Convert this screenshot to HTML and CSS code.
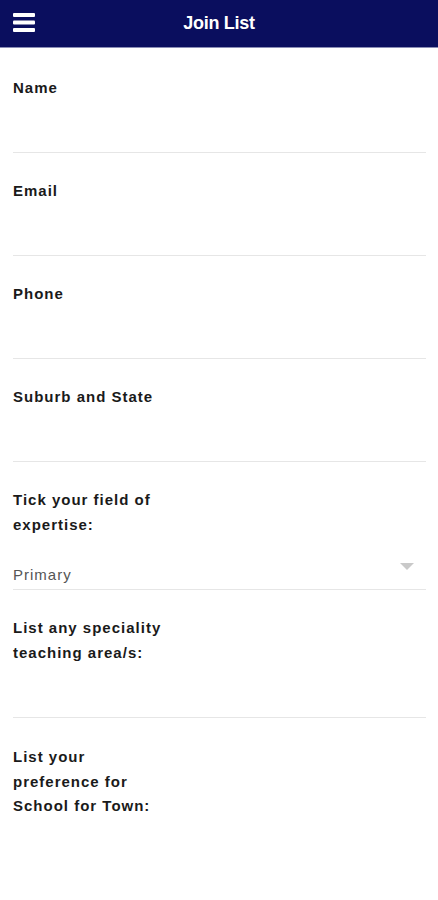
FILE: index.html
```html
<!DOCTYPE html>
<html>
<head>
<meta charset="utf-8">
<link rel="stylesheet" href="styles.css">
</head>
<body>
<header class="topbar">
  <svg class="menu" width="22" height="19" viewBox="0 0 22 19">
    <rect x="0" y="0" width="22" height="4" rx="1" fill="#fff"/>
    <rect x="0" y="7.5" width="22" height="4" rx="1" fill="#fff"/>
    <rect x="0" y="15" width="22" height="4" rx="1" fill="#fff"/>
  </svg>
  <h1 class="title">Join List</h1>
</header>
<main class="form">
  <div class="field">
    <div class="label">Name</div>
    <div class="input"></div>
  </div>
  <div class="field">
    <div class="label">Email</div>
    <div class="input"></div>
  </div>
  <div class="field">
    <div class="label">Phone</div>
    <div class="input"></div>
  </div>
  <div class="field">
    <div class="label">Suburb and State</div>
    <div class="input"></div>
  </div>
  <div class="field">
    <div class="label narrow">Tick your field of expertise:</div>
    <div class="select">
      <span class="value">Primary</span>
      <svg class="caret" width="14" height="7" viewBox="0 0 14 7"><path d="M0 0 H14 L7 7 Z" fill="#c9c9c9"/></svg>
    </div>
  </div>
  <div class="field">
    <div class="label narrow">List any speciality teaching area/s:</div>
    <div class="input short"></div>
  </div>
  <div class="field last">
    <div class="label narrow2">List your preference for School for Town:</div>
  </div>
</main>
</body>
</html>
```
FILE: styles.css
```css
html, body {
  margin: 0;
  padding: 0;
  background: #fff;
  font-family: "Liberation Sans", Arial, sans-serif;
}
.topbar {
  position: relative;
  height: 47px;
  background: #0a0e5e;
  border-bottom: 1px solid #8a8db5;
  display: flex;
  align-items: center;
  justify-content: center;
}
.menu {
  position: absolute;
  left: 13px;
  top: 13px;
}
.title {
  margin: 0;
  color: #fff;
  font-size: 18px;
  font-weight: bold;
  letter-spacing: -0.3px;
}
.form {
  padding-top: 2px;
}
.field {
  margin: 0 12px 0 13px;
  padding-top: 25px;
  border-bottom: 1px solid #e6e6e6;
}
.field.last {
  border-bottom: none;
  padding-top: 27px;
}
.label {
  font-size: 15px;
  font-weight: bold;
  letter-spacing: 1px;
  line-height: 25px;
  color: #1a1a1a;
}
.label.narrow {
  width: 160px;
}
.label.narrow2 {
  width: 140px;
  line-height: 24.5px;
}
.input {
  height: 52px;
}
.input.short {
  height: 52px;
}
.select {
  margin-top: 25px;
  height: 24px;
  padding-bottom: 3px;
  display: flex;
  align-items: center;
  justify-content: space-between;
}
.value {
  font-size: 15px;
  letter-spacing: 1px;
  color: #555;
}
.caret {
  margin-right: 12px;
  margin-top: -16px;
}
```
